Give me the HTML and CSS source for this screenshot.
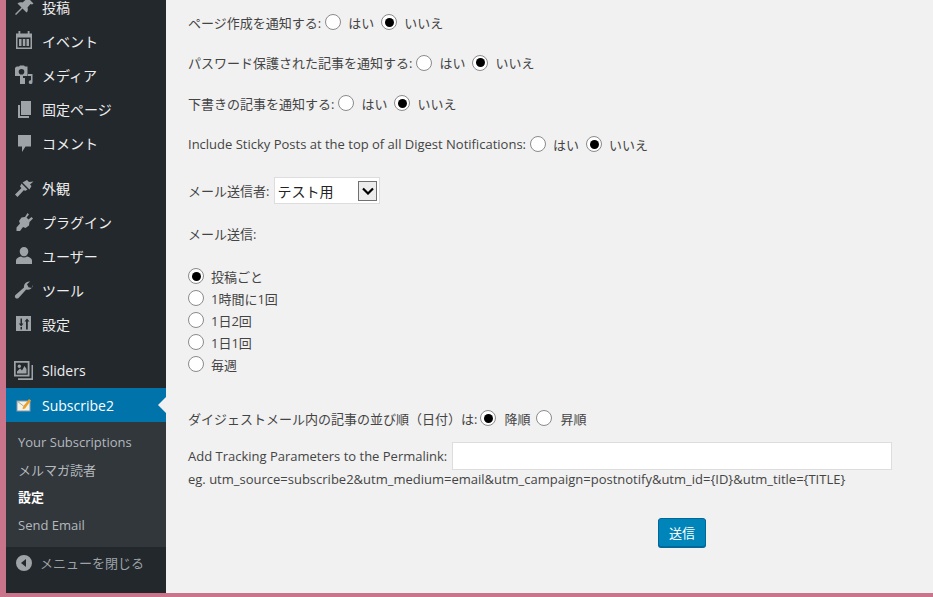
FILE: index.html
```html
<!DOCTYPE html>
<html lang="ja">
<head>
<meta charset="utf-8">
<title>Subscribe2 設定</title>
<link rel="stylesheet" href="styles.css">
</head>
<body>
<div class="frame">
  <nav class="sidebar">
    <ul class="menu">
      <li class="item"><svg class="icon" viewBox="0 0 20 20"><path d="M13 0l6.500 6.500-1.500 1-1.500-.5-3 3.500c.7 2 .3 3.800-1 5L8.500 11.500 2 18l-1-1 6.500-6.500-4-4c1.500-1.300 3.300-1.700 5-1l3.500-3-.5-1.500z"/></svg><span>投稿</span></li>
      <li class="item"><svg class="icon" viewBox="0 0 20 20"><path d="M4.500 0h1.800v2.500h7.400V0h1.800v2.500H18V18H2V2.500h2.500zM3.500 6.500v10h13v-10zM5 8h2.500v7H5zm3.800 0h2.500v7H8.800zm3.700 0H15v7h-2.500z"/></svg><span>イベント</span></li>
      <li class="item"><svg class="icon" viewBox="0 0 20 20"><path fill-rule="evenodd" d="M3 1.500h2l1-1h4l1 1h2.500v9.500H9v2H6v-2H1V3.500c0-1 1-2 2-2zm4.500 2.500a2.800 2.800 0 1 0 0 5.600 2.800 2.800 0 0 0 0-5.600z"/><path d="M6 13h5v6H6zM18.500 9v8.200a1.900 1.900 0 1 1-1.500-1.900V11h-3V9z"/></svg><span>メディア</span></li>
      <li class="item"><svg class="icon" viewBox="0 0 20 20"><path d="M7 2h10v14H7zM4 6h2v11h9v2H4z"/></svg><span>固定ページ</span></li>
      <li class="item"><svg class="icon" viewBox="0 0 20 20"><path d="M4 2h13v11.500h-5.500L8 19v-5.500H4z"/></svg><span>コメント</span></li>
      <li class="sep"></li>
      <li class="item"><svg class="icon" viewBox="0 0 20 20"><path d="M19.500 3.500l-4.500.5L13 2 8.500 4.500l7 7 2-3.500-1.500-1.500zM7.500 5.500l6 6-2.500 1.500-1-1L3.500 19 1 16.500 7.500 10 6 8.500z"/></svg><span>外観</span></li>
      <li class="item"><svg class="icon" viewBox="0 0 20 20"><path d="M13.500 1L15 2.500l-2.500 3 2 2 3-2.500L19 6.500 15.500 10l-.5 3.500-3.500 2.500-2.500-1L6 19H2.500v-3.500L6 11.500l-1-2.500 2.500-3.500L11 5z"/></svg><span>プラグイン</span></li>
      <li class="item"><svg class="icon" viewBox="0 0 20 20"><path d="M10 1a4.300 4.300 0 0 1 4.300 4.300c0 2.700-1.900 5-4.300 5s-4.300-2.300-4.300-5A4.300 4.300 0 0 1 10 1zM2 18v-3.500c0-2 2.500-3.500 5-4 1.800 1.200 4.200 1.200 6 0 2.500.5 5 2 5 4V18z"/></svg><span>ユーザー</span></li>
      <li class="item"><svg class="icon" viewBox="0 0 20 20"><path d="M19 4.500a5.200 5.200 0 0 1-6.800 5L5 17.500a2.200 2.200 0 1 1-3-3l8-7A5.200 5.200 0 0 1 16 1.500l-3 2.800L14.500 7.300 17.500 8z"/></svg><span>ツール</span></li>
      <li class="item"><svg class="icon" viewBox="0 0 20 20"><path fill-rule="evenodd" d="M2 2h15v15H2zM6.500 4.500v5H4.800L7.200 12.500 9.500 9.500H8v-5zM13 4.500L10.500 7.500H12v8h1.800v-8h1.700zM6.500 13v2.500H8V13z"/></svg><span>設定</span></li>
      <li class="sep"></li>
      <li class="item sliders"><svg class="icon" viewBox="0 0 20 20"><path fill-rule="evenodd" d="M0 0h15.500v15.500H0zM1.700 1.700v12h12v-12zM3 12.500v-2l3-3 2 2 2.500-4.500 2 3v4.500zM5.300 3.500a1.700 1.700 0 1 1 0 3.400 1.700 1.700 0 0 1 0-3.400z"/><path d="M17.500 4H19v15H4v-1.700h13.500z"/></svg><span>Sliders</span></li>
      <li class="item current">
        <svg class="mail" viewBox="0 0 16 16"><rect x="1" y="4" width="13" height="10" fill="#f4f2e4" stroke="#8a9ab0"/><path d="M1 4l6.500 5L14 4" fill="none" stroke="#b0a890"/><path d="M7 10l6-8 2 1.500-6 8-2.500.8z" fill="#f0a020"/></svg>
        <span>Subscribe2</span>
      </li>
    </ul>
    <ul class="submenu">
      <li>Your Subscriptions</li>
      <li>メルマガ読者</li>
      <li class="active">設定</li>
      <li>Send Email</li>
    </ul>
    <div class="collapse">
      <svg class="collapse-icon" viewBox="0 0 16 16"><path fill-rule="evenodd" d="M8 0a8 8 0 1 1 0 16A8 8 0 0 1 8 0zm2 4L5 8l5 4z"/></svg>
      <span>メニューを閉じる</span>
    </div>
  </nav>
  <main class="content">
    <p class="row"><span>ページ作成を通知する:</span><input class="radio" type="radio" name="a"><label>はい</label><input class="radio" type="radio" name="a" checked><label>いいえ</label></p>
    <p class="row r2"><span>パスワード保護された記事を通知する:</span><input class="radio" type="radio" name="b"><label>はい</label><input class="radio" type="radio" name="b" checked><label>いいえ</label></p>
    <p class="row r2"><span>下書きの記事を通知する:</span><input class="radio" type="radio" name="c"><label>はい</label><input class="radio" type="radio" name="c" checked><label>いいえ</label></p>
    <p class="row r2"><span>Include Sticky Posts at the top of all Digest Notifications:</span><input class="radio" type="radio" name="d"><label>はい</label><input class="radio" type="radio" name="d" checked><label>いいえ</label></p>
    <div class="row sender">
      <span>メール送信者:</span>
      <div class="select"><span>テスト用</span><span class="select-btn"><svg viewBox="0 0 12 8"><path d="M1 1.500l5 5 5-5" fill="none" stroke="#000" stroke-width="2.200"/></svg></span></div>
    </div>
    <p class="row heading">メール送信:</p>
    <ul class="freq">
      <li><input class="radio" type="radio" name="f" checked><label>投稿ごと</label></li>
      <li><input class="radio" type="radio" name="f"><label>1時間に1回</label></li>
      <li><input class="radio" type="radio" name="f"><label>1日2回</label></li>
      <li><input class="radio" type="radio" name="f"><label>1日1回</label></li>
      <li><input class="radio" type="radio" name="f"><label>毎週</label></li>
    </ul>
    <p class="row order"><span>ダイジェストメール内の記事の並び順（日付）は:</span><input class="radio" type="radio" name="o" checked><label>降順</label><input class="radio" type="radio" name="o"><label>昇順</label></p>
    <div class="row tracking"><span>Add Tracking Parameters to the Permalink:</span><input class="text" type="text"></div>
    <p class="example">eg. utm_source=subscribe2&amp;utm_medium=email&amp;utm_campaign=postnotify&amp;utm_id={ID}&amp;utm_title={TITLE}</p>
    <div class="submit"><button class="btn" type="button">送信</button></div>
  </main>
</div>
</body>
</html>
```

FILE: styles.css
```css
* { box-sizing: border-box; }
html, body { margin: 0; height: 100%; }
body { overflow: hidden; background: #c9748a; font-family: "Open Sans", "Noto Sans CJK JP", sans-serif; font-size: 13px; color: #444; }
ul { list-style: none; margin: 0; padding: 0; }
p { margin: 0; }
.frame { display: flex; height: 593px; margin-left: 6px; overflow: hidden; }
.sidebar { width: 160px; flex: none; background: #23282d; display: flex; flex-direction: column; color: #eee; font-size: 14px; }
.menu { margin-top: -10px; }
.item { height: 34px; display: flex; align-items: center; padding-left: 8px; gap: 8px; }
.icon { width: 20px; height: 20px; fill: #9ea3a8; flex: none; }
.sep { height: 11px; }
.sep:nth-child(12) { height: 12px; }
.sliders { height: 35px; }
.current { background: #0073aa; color: #fff; position: relative; }
.current::after { content: ""; position: absolute; right: 0; top: 9px; border: 8px solid transparent; border-right-color: #f1f1f1; border-left-width: 0; }
.mail { width: 16px; height: 16px; margin: 0 2px; flex: none; }
.submenu { background: #32373c; padding: 7px 0 0; height: 125px; color: #b4b9be; }
.submenu li { height: 27.700px; line-height: 27.700px; padding-left: 12px; font-size: 13px; }
.submenu .active { color: #fff; font-weight: 700; }
.collapse { flex: 1; display: flex; align-items: flex-start; gap: 8px; padding: 8px 0 0 10px; color: #9ea3a8; font-size: 13px; line-height: 16px; }
.collapse-icon { width: 16px; height: 16px; fill: #9ea3a8; flex: none; }
.content { flex: 1; background: #f1f1f1; padding: 12px 0 0 22px; min-width: 0; }
.row { display: flex; align-items: center; height: 20px; white-space: nowrap; }
.r2 { margin-top: 20.700px; }
.radio { appearance: none; width: 16px; height: 16px; margin: 0 7px 0 4px; border: 1px solid #8a8a8a; border-radius: 50%; background: #fff; flex: none; position: relative; }
.radio:checked::after { content: ""; position: absolute; inset: 2.500px; border-radius: 50%; background: #000; }
.row label { margin-right: 3px; }
.sender { margin-top: 23px; height: 27px; }
.select { width: 106px; height: 27px; margin-left: 5px; background: #fff; border: 1px solid #ddd; display: flex; align-items: center; justify-content: space-between; padding: 0 2px; font-size: 14px; color: #222; }
.select-btn { width: 19px; height: 20px; border: 1px solid #707070; background: #ececec; display: flex; align-items: center; justify-content: center; }
.select-btn svg { width: 12px; height: 8px; }
.heading { margin-top: 19px; }
.freq { margin-top: 22px; }
.freq li { height: 22px; display: flex; align-items: center; }
.freq .radio { margin: 0 7px 0 0; }
.order { margin-top: 33px; }
.order .radio { margin-left: 3px; margin-right: 8px; }
.tracking { margin-top: 14px; height: 28px; }
.text { width: 440px; height: 28px; margin-left: 5px; border: 1px solid #ddd; background: #fff; }
.example { margin-top: -1px; height: 20px; line-height: 20px; white-space: nowrap; }
.submit { margin-top: 29px; padding-left: 470px; }
.btn { width: 48px; height: 29px; padding: 0; border: 1px solid #006799; border-radius: 3px; background: #0085ba; box-shadow: 0 1px 0 #006799; color: #fff; font: inherit; }
```
